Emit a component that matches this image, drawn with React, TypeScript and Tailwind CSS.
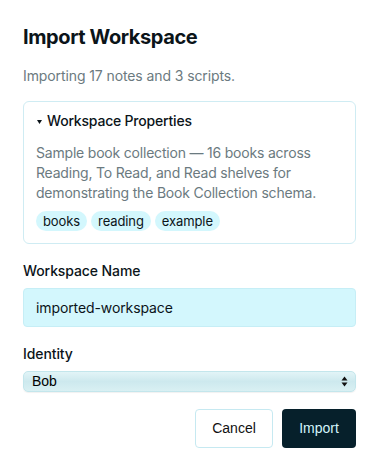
import * as React from 'react'

const tags = ['books', 'reading', 'example']

export default function App() {
  const [name, setName] = React.useState('imported-workspace')
  const [identity, setIdentity] = React.useState('Bob')

  return (
    <div className="w-[379px] h-[469px] bg-white px-[23px] pt-[24px] font-['Inter',sans-serif] text-[#0b1419]">
      <h2 className="text-[20px] leading-[26px] font-bold tracking-[-0.4px]">Import Workspace</h2>
      <p className="mt-[17px] text-[14px] leading-[18px] tracking-[-0.1px] text-[#6b7a80]">Importing 17 notes and 3 scripts.</p>

      {/* Properties card */}
      <div className="mt-[16px] rounded-[6px] border border-[#cfecf3] px-[12px] pt-[10px] pb-[12px]">
        <div className="flex items-center gap-[5px] text-[14px] leading-[18px] font-medium tracking-[-0.2px]">
          <svg className="ml-[1px] mt-[1px]" width="5" height="4" viewBox="0 0 5 4">
            <path d="M0 0 H5 L2.5 4 Z" fill="#0b1419" />
          </svg>
          <span>Workspace Properties</span>
        </div>
        <p className="mt-[13px] text-[14px] leading-[20px] tracking-[-0.2px] text-[#6b7a80]">
          Sample book collection — 16 books across Reading, To Read, and Read shelves for demonstrating the Book Collection schema.
        </p>
        <div className="mt-[8px] flex gap-[4px]">
          {tags.map(tag => (
            <span key={tag} className="rounded-full bg-[#d3f7fd] px-[7px] h-[20px] flex items-center text-[13px] leading-none tracking-[-0.1px]">
              {tag}
            </span>
          ))}
        </div>
      </div>

      <label className="mt-[18px] block text-[14px] leading-[18px] font-medium tracking-[-0.1px]">Workspace Name</label>
      <input
        value={name}
        onChange={e => setName(e.target.value)}
        className="mt-[8px] block w-full h-[39px] rounded-[4px] border border-[#c6eef6] bg-[#d3f7fd] px-[12px] text-[14px] tracking-[-0.1px] outline-none"
      />

      <label className="mt-[18px] block text-[14px] leading-[18px] font-medium tracking-[-0.1px]">Identity</label>
      <div className="relative mt-[8px]">
        <select
          value={identity}
          onChange={e => setIdentity(e.target.value)}
          className="block w-full h-[21px] appearance-none rounded-[5px] border border-[#c3e6ec] bg-gradient-to-b from-[#e2f4f7] via-[#cde9ee] to-[#d9f0f3] pl-[8px] pr-[20px] font-['Liberation_Sans',sans-serif] text-[14px] leading-[19px] text-black shadow-[0_1px_1px_rgba(0,0,0,0.06)] outline-none"
        >
          <option>Bob</option>
          <option>Alice</option>
        </select>
        <svg className="pointer-events-none absolute right-[8px] top-[5px]" width="7" height="11" viewBox="0 0 7 11">
          <path d="M3.5 0.5 L6.5 4.5 H0.5 Z" fill="#111" />
          <path d="M3.5 10.5 L6.5 6.5 H0.5 Z" fill="#111" />
        </svg>
      </div>

      <div className="mt-[17px] flex justify-end gap-[9px]">
        <button className="h-[39px] w-[78px] rounded-[4px] border border-[#c6e9f1] bg-white font-['Liberation_Sans',sans-serif] text-[14px] text-[#111]">
          Cancel
        </button>
        <button className="h-[39px] w-[74px] rounded-[4px] bg-[#06202b] font-['Liberation_Sans',sans-serif] text-[14px] text-[#d3f5fb]">
          Import
        </button>
      </div>
    </div>
  )
}
